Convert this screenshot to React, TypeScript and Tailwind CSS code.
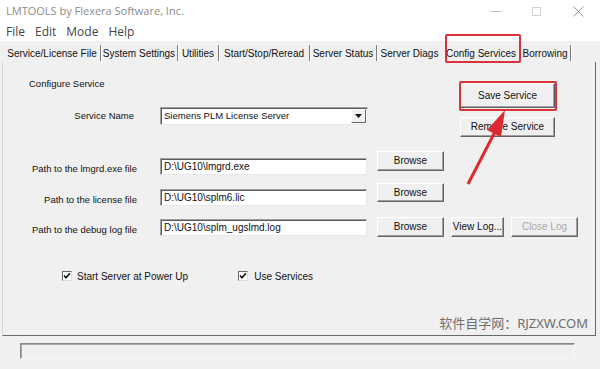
import React from 'react';

const sans = { fontFamily: '"Liberation Sans", Arial, sans-serif' };

const tabs = [
  { label: 'Service/License File', w: 'w-[97px]', sep: true },
  { label: 'System Settings', w: 'w-[77px]', sep: true },
  { label: 'Utilities', w: 'w-[41px]', sep: true },
  { label: 'Start/Stop/Reread', w: 'w-[91px]', sep: true },
  { label: 'Server Status', w: 'w-[67px]', sep: true },
  { label: 'Server Diags', w: 'w-[65px]', sep: false },
  { label: 'Config Services', w: 'w-[78px]', sep: false },
  { label: 'Borrowing', w: 'w-[51px]', sep: true },
];

const WinButton: React.FC<{ className?: string; disabled?: boolean; children: React.ReactNode }> = ({ className = '', disabled, children }) => (
  <div
    className={`flex items-center justify-center bg-[#f0f0f0] border border-t-white border-l-white border-r-[#646464] border-b-[#646464] shadow-[inset_-1px_-1px_0_#a0a0a0] text-[10px] leading-none ${disabled ? 'text-[#a8a8a8]' : 'text-[#111]'} ${className}`}
  >
    {children}
  </div>
);

const TextBox: React.FC<{ value: string; className?: string }> = ({ value, className = '' }) => (
  <div
    className={`w-[207px] h-[17px] bg-white border border-t-[#a0a0a0] border-l-[#a0a0a0] border-b-[#e8e8e8] border-r-[#e8e8e8] shadow-[inset_1px_1px_0_#5a5a5a] flex items-center pl-[3px] text-[10px] text-[#111] ${className}`}
  >
    {value}
  </div>
);

const CheckBox: React.FC = () => (
  <div className="w-[10px] h-[10px] bg-white border border-t-[#6a6a6a] border-l-[#6a6a6a] border-b-[#dcdcdc] border-r-[#dcdcdc] flex items-center justify-center">
    <svg width="8" height="8" viewBox="0 0 8 8">
      <path d="M1 3.5 L3 5.8 L7 1.2" stroke="#111" strokeWidth="1.6" fill="none" />
    </svg>
  </div>
);

export default function App() {
  return (
    <div className="relative w-[600px] h-[369px] overflow-hidden bg-[#f0f0f0] flex flex-col" style={sans}>
      {/* title bar */}
      <div
        className="h-[22px] bg-white flex items-center pl-[6px] text-[11px] text-[#8c8c8c]"
        style={{ fontFamily: '"Open Sans", "Noto Sans", sans-serif' }}
      >
        <span>LMTOOLS by Flexera Software, Inc.</span>
        <div className="ml-auto flex items-center h-full">
          <div className="w-[40px] flex justify-center">
            <div className="w-[10px] h-px bg-[#b5b5b5]" />
          </div>
          <div className="w-[40px] flex justify-center">
            <div className="w-[9px] h-[9px] border border-[#d0d0d0]" />
          </div>
          <div className="w-[44px] flex justify-center">
            <svg width="11" height="11" viewBox="0 0 11 11">
              <path d="M0.5 0.5 L10.5 10.5 M10.5 0.5 L0.5 10.5" stroke="#9a9a9a" strokeWidth="1" />
            </svg>
          </div>
        </div>
      </div>

      {/* menu bar */}
      <div
        className="h-[19px] bg-white flex items-center pl-[6px] gap-[10px] text-[12px] text-[#454545]"
        style={{ fontFamily: '"Open Sans", "Noto Sans", sans-serif' }}
      >
        <span>File</span>
        <span>Edit</span>
        <span>Mode</span>
        <span>Help</span>
      </div>

      {/* tab strip */}
      <div className="h-[21px] flex items-start pt-[4px] pl-[4px] text-[10px] text-[#111]">
        {tabs.map((t) => (
          <div
            key={t.label}
            className={`${t.w} h-[16px] flex items-center justify-center whitespace-nowrap ${t.sep ? 'border-r border-r-[#7a7a7a] shadow-[1px_0_0_#ffffff]' : ''}`}
          >
            {t.label}
          </div>
        ))}
      </div>

      {/* property page */}
      <div className="relative ml-[2px] w-[594px] h-[274px] border-l border-l-[#d4d4d4] border-r border-r-[#6a6a6a] border-b border-b-[#6a6a6a] flex flex-col text-[9.5px] text-[#111]">
        {/* top section */}
        <div className="flex items-start h-[75px]">
          <div className="w-[457px] flex flex-col">
            <div className="mt-[16px] ml-[26px] h-[12px] leading-[12px]">Configure Service</div>
            <div className="mt-[17px] flex items-center h-[18px]">
              <div className="w-[131px] text-right">Service Name</div>
              <div className="ml-[26px] w-[208px] h-[18px] bg-white border border-t-[#a0a0a0] border-l-[#a0a0a0] border-b-[#e8e8e8] border-r-[#e8e8e8] shadow-[inset_1px_1px_0_#5a5a5a] flex items-center pl-[3px] pr-px">
                <span className="flex-1">Siemens PLM License Server</span>
                <div className="w-[15px] h-[14px] bg-[#f0f0f0] border border-t-white border-l-white border-r-[#646464] border-b-[#646464] flex items-center justify-center">
                  <svg width="7" height="4" viewBox="0 0 7 4">
                    <path d="M0 0 L7 0 L3.5 4 Z" fill="#111" />
                  </svg>
                </div>
              </div>
            </div>
          </div>
          <div className="flex flex-col pt-[21px]">
            <WinButton className="w-[95px] h-[25px]">Save Service</WinButton>
            <WinButton className="w-[95px] h-[20px] mt-[9px]">Remove Service</WinButton>
          </div>
        </div>

        {/* lmgrd row */}
        <div className="mt-[14px] flex items-start h-[32px]">
          <div className="w-[134px] text-right mt-[12px] h-[12px] leading-[12px]">Path to the lmgrd.exe file</div>
          <TextBox value="D:\UG10\lmgrd.exe" className="ml-[23px] mt-[7px]" />
          <WinButton className="ml-[10px] w-[67px] h-[20px]">Browse</WinButton>
        </div>

        {/* license row */}
        <div className="flex items-start h-[34px]">
          <div className="w-[134px] text-right mt-[11px] h-[12px] leading-[12px]">Path to the license file</div>
          <TextBox value="D:\UG10\splm6.lic" className="ml-[23px] mt-[6px]" />
          <WinButton className="ml-[10px] w-[67px] h-[19px]">Browse</WinButton>
        </div>

        {/* debug log row */}
        <div className="flex items-start h-[20px]">
          <div className="w-[134px] text-right mt-[7px] h-[12px] leading-[12px]">Path to the debug log file</div>
          <TextBox value="D:\UG10\splm_ugslmd.log" className="ml-[23px] mt-[2px]" />
          <WinButton className="ml-[10px] w-[67px] h-[20px]">Browse</WinButton>
          <WinButton className="ml-[7px] w-[53px] h-[20px]">View Log...</WinButton>
          <WinButton className="ml-[7px] w-[67px] h-[20px]" disabled>Close Log</WinButton>
        </div>

        {/* checkboxes */}
        <div className="mt-[34px] flex items-center h-[10px] text-[10px]">
          <div className="ml-[59px]"><CheckBox /></div>
          <span className="ml-[5px]">Start Server at Power Up</span>
          <div className="ml-[50px]"><CheckBox /></div>
          <span className="ml-[6px]">Use Services</span>
        </div>

        {/* watermark */}
        <div
          className="mt-auto mb-[4px] mr-[7px] self-end text-[13px] leading-[16px] text-[#6e6e6e]"
          style={{ fontFamily: '"Noto Sans", "Noto Sans CJK SC", sans-serif' }}
        >
          软件自学网：RJZXW.COM
        </div>
      </div>

      {/* status bar */}
      <div className="flex-1 pt-[7px] pl-[20px]">
        <div className="w-[555px] h-[16px] border border-t-[#8a8a8a] border-l-[#8a8a8a] border-b-[#f8f8f8] border-r-[#f8f8f8] shadow-[inset_1px_1px_0_#a8a8a8]" />
      </div>

      {/* annotation: red boxes and arrow */}
      <div className="absolute left-[445px] top-[34px] w-[76px] h-[29px] border-2 border-[#d8323c] rounded-[2px]" />
      <div className="absolute left-[459px] top-[81px] w-[98px] h-[30px] border-2 border-[#d8323c] rounded-[2px]" />
      <svg className="absolute left-0 top-0" width="600" height="369" viewBox="0 0 600 369">
        <line x1="468" y1="184" x2="497" y2="128" stroke="#dc2a30" strokeWidth="3" />
        <polygon points="505,110 487,130 501,137" fill="#dc2a30" />
      </svg>
    </div>
  );
}
